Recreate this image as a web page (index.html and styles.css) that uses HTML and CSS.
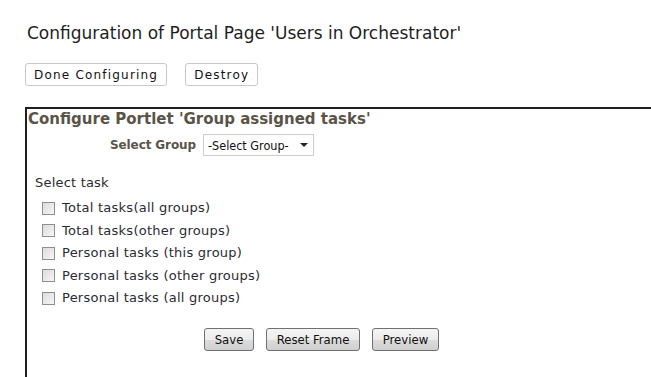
FILE: index.html
```html
<!DOCTYPE html>
<html lang="en">
<head>
  <meta charset="UTF-8" />
  <title>Configuration of Portal Page</title>
  <link rel="stylesheet" href="styles.css">
</head>
<body>
  <div class="page">
    <h1 class="page-title">Configuration of Portal Page 'Users in Orchestrator'</h1>

    <div class="page-actions">
      <button class="plain-btn">Done Configuring</button>
      <button class="plain-btn">Destroy</button>
    </div>

    <div class="portlet-box">
      <h2 class="portlet-title">Configure Portlet 'Group assigned tasks'</h2>

      <div class="group-row">
        <label class="group-label" for="groupSelect">Select Group</label>
        <div class="fake-select" id="groupSelect">
          <span>-Select Group-</span>
          <span class="caret"></span>
        </div>
      </div>

      <p class="task-heading">Select task</p>
      <div class="task-list">
        <label class="task-item"><span class="check"></span>Total tasks(all groups)</label>
        <label class="task-item"><span class="check"></span>Total tasks(other groups)</label>
        <label class="task-item"><span class="check"></span>Personal tasks (this group)</label>
        <label class="task-item"><span class="check"></span>Personal tasks (other groups)</label>
        <label class="task-item"><span class="check"></span>Personal tasks (all groups)</label>
      </div>

      <div class="form-actions">
        <button class="gray-btn btn-save">Save</button>
        <button class="gray-btn btn-reset">Reset Frame</button>
        <button class="gray-btn btn-preview">Preview</button>
      </div>
    </div>
  </div>
</body>
</html>
```

FILE: styles.css
```css
html, body {
  margin: 0;
  padding: 0;
  overflow: hidden;
  background: #fff;
}

body {
  font-family: "DejaVu Sans", Verdana, sans-serif;
  color: #222;
}

.page {
  padding: 23px 0 0 25px;
}

.page-title {
  margin: 0 0 0 2px;
  font-size: 17px;
  font-weight: normal;
  line-height: 20px;
  color: #1e1e1e;
}

.page-actions {
  display: flex;
  gap: 18px;
  margin-top: 20px;
}

.plain-btn {
  height: 23px;
  padding: 0 8px;
  font-family: "DejaVu Sans", Verdana, sans-serif;
  font-size: 12px;
  letter-spacing: 1.2px;
  color: #111;
  background: #fff;
  border: 1px solid #c8c8c8;
  border-radius: 3px;
}

.portlet-box {
  width: 700px;
  height: 300px;
  margin-top: 21px;
  border: 2px solid #1f1f1f;
  border-right: none;
  border-bottom: none;
}

.portlet-title {
  margin: 1px 0 0 1px;
  font-size: 15px;
  line-height: 18px;
  color: #5a5448;
}

.group-row {
  display: flex;
  align-items: center;
  gap: 7px;
  margin: 6px 0 0 83px;
}

.group-label {
  font-size: 12px;
  font-weight: bold;
  letter-spacing: -0.1px;
  color: #5a5448;
}

.fake-select {
  display: flex;
  align-items: center;
  justify-content: space-between;
  width: 100px;
  height: 20px;
  padding: 0 5px 0 4px;
  font-family: "DejaVu Sans Condensed", Tahoma, sans-serif;
  font-size: 12.5px;
  color: #111;
  border: 1px solid #ccc;
}

.caret {
  width: 0;
  height: 0;
  border-left: 4px solid transparent;
  border-right: 4px solid transparent;
  border-top: 4px solid #222;
}

.task-heading {
  margin: 19px 0 0 8px;
  font-size: 13px;
  line-height: 16px;
  letter-spacing: 0.2px;
  color: #2b2b2b;
}

.task-list {
  display: flex;
  flex-direction: column;
  gap: 6.5px;
  margin: 9px 0 0 15px;
}

.task-item {
  display: flex;
  align-items: center;
  gap: 7px;
  font-size: 13px;
  line-height: 16px;
  letter-spacing: 0.25px;
  color: #2b2b33;
}

.check {
  width: 11px;
  height: 11px;
  border: 1px solid #8f8f8f;
  background: linear-gradient(135deg, #dcdcdc, #f6f6f6);
}

.form-actions {
  display: flex;
  gap: 12px;
  margin: 22px 0 0 177px;
}

.gray-btn {
  height: 23px;
  padding: 0;
  font-family: "DejaVu Sans Condensed", Tahoma, sans-serif;
  font-size: 13px;
  color: #111;
  background: linear-gradient(#f4f4f4, #ececec 50%, #dcdcdc 51%, #d0d0d0);
  border: 1px solid #707070;
  border-radius: 3px;
}

.btn-save { width: 50px; }
.btn-reset { width: 94px; }
.btn-preview { width: 67px; }
```
